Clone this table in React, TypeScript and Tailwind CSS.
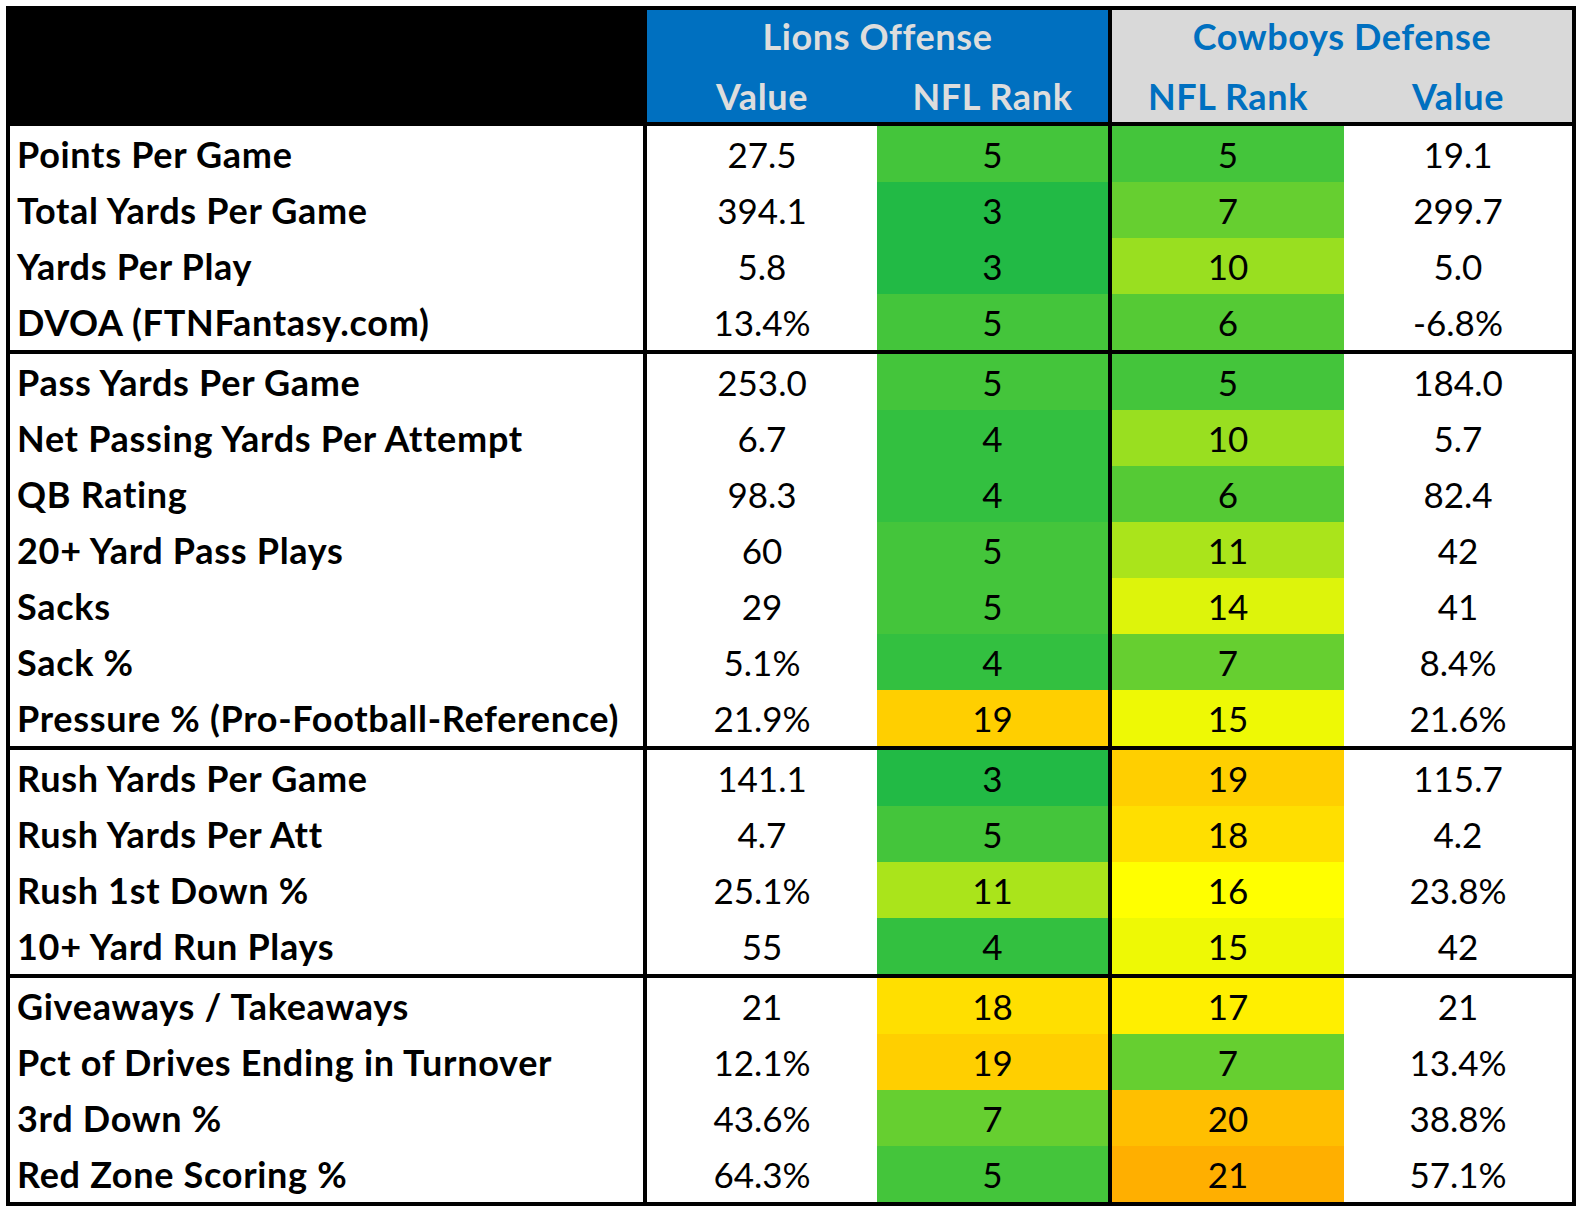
import React from 'react';

type Row = [string, string, number, number, string];

const sections: Row[][] = [
  [
    ['Points Per Game', '27.5', 5, 5, '19.1'],
    ['Total Yards Per Game', '394.1', 3, 7, '299.7'],
    ['Yards Per Play', '5.8', 3, 10, '5.0'],
    ['DVOA (FTNFantasy.com)', '13.4%', 5, 6, '-6.8%'],
  ],
  [
    ['Pass Yards Per Game', '253.0', 5, 5, '184.0'],
    ['Net Passing Yards Per Attempt', '6.7', 4, 10, '5.7'],
    ['QB Rating', '98.3', 4, 6, '82.4'],
    ['20+ Yard Pass Plays', '60', 5, 11, '42'],
    ['Sacks', '29', 5, 14, '41'],
    ['Sack %', '5.1%', 4, 7, '8.4%'],
    ['Pressure % (Pro-Football-Reference)', '21.9%', 19, 15, '21.6%'],
  ],
  [
    ['Rush Yards Per Game', '141.1', 3, 19, '115.7'],
    ['Rush Yards Per Att', '4.7', 5, 18, '4.2'],
    ['Rush 1st Down %', '25.1%', 11, 16, '23.8%'],
    ['10+ Yard Run Plays', '55', 4, 15, '42'],
  ],
  [
    ['Giveaways / Takeaways', '21', 18, 17, '21'],
    ['Pct of Drives Ending in Turnover', '12.1%', 19, 7, '13.4%'],
    ['3rd Down %', '43.6%', 7, 20, '38.8%'],
    ['Red Zone Scoring %', '64.3%', 5, 21, '57.1%'],
  ],
];

// green (1) -> yellow (16) -> red (32) colour scale, like Excel
const rankColor: Record<number, string> = {
  3: 'bg-[#22BA45]',
  4: 'bg-[#33C040]',
  5: 'bg-[#44C53B]',
  6: 'bg-[#55CA35]',
  7: 'bg-[#66CF30]',
  10: 'bg-[#99DF20]',
  11: 'bg-[#AAE41B]',
  14: 'bg-[#DDF40B]',
  15: 'bg-[#EEF905]',
  16: 'bg-[#FFFF00]',
  17: 'bg-[#FFEF00]',
  18: 'bg-[#FFDF00]',
  19: 'bg-[#FFCF00]',
  20: 'bg-[#FFBF00]',
  21: 'bg-[#FFAF00]',
};

const cell = 'h-[56px] flex items-center justify-center text-[35px] text-black';

const StatRow: React.FC<{ row: Row }> = ({ row }) => {
  const [label, off, offRank, defRank, def] = row;
  return (
    <div className="flex gap-[4px]">
      <div className="w-[633px] h-[56px] flex items-center pl-[7px] bg-white text-[36px] tracking-[0.7px] font-bold text-black whitespace-nowrap">
        {label}
      </div>
      <div className="flex">
        <div className={`${cell} w-[230px] bg-white`}>{off}</div>
        <div className={`${cell} w-[231px] ${rankColor[offRank]}`}>{offRank}</div>
      </div>
      <div className="flex">
        <div className={`${cell} w-[232px] ${rankColor[defRank]}`}>{defRank}</div>
        <div className={`${cell} w-[228px] bg-white`}>{def}</div>
      </div>
    </div>
  );
};

export default function App() {
  return (
    <div className="min-h-screen bg-white p-[6px] font-[family-name:Lato,sans-serif]">
      <div className="w-[1570px] bg-black p-[4px] flex flex-col gap-[4px]">
        {/* header */}
        <div className="flex gap-[4px] h-[112px]">
          <div className="w-[633px] bg-black" />
          <div className="w-[461px] bg-[#0070C0] text-[#DDDDDD] font-bold text-[36px] tracking-[0.6px]">
            <div className="h-[52px] flex items-center justify-center">Lions Offense</div>
            <div className="h-[60px] pt-[8px] flex">
              <div className="w-[230px] flex items-center justify-center">Value</div>
              <div className="w-[231px] flex items-center justify-center">NFL Rank</div>
            </div>
          </div>
          <div className="w-[460px] bg-[#D9D9D9] text-[#0070C0] font-bold text-[36px] tracking-[0.6px]">
            <div className="h-[52px] flex items-center justify-center">Cowboys Defense</div>
            <div className="h-[60px] pt-[8px] flex">
              <div className="w-[232px] flex items-center justify-center">NFL Rank</div>
              <div className="w-[228px] flex items-center justify-center">Value</div>
            </div>
          </div>
        </div>

        {sections.map((rows, i) => (
          <div key={i} className="flex flex-col">
            {rows.map((r) => (
              <StatRow key={r[0]} row={r} />
            ))}
          </div>
        ))}
      </div>
    </div>
  );
}
